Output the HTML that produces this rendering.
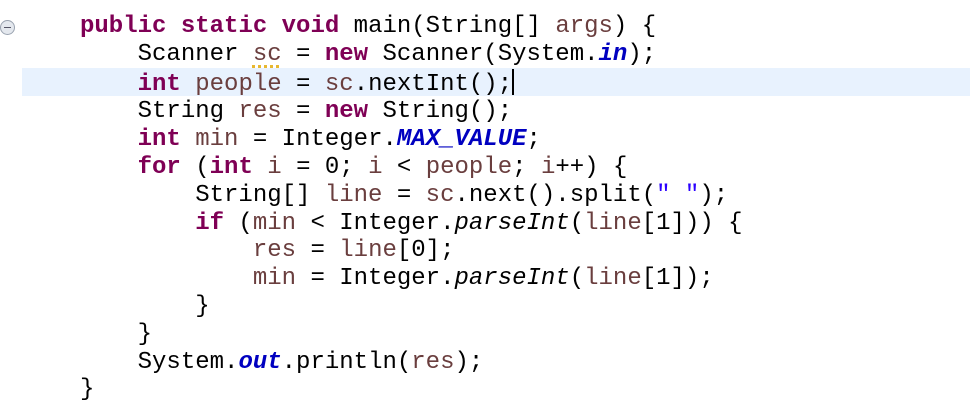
<!DOCTYPE html>
<html><head><meta charset="utf-8"><style>
body{margin:0;width:970px;height:420px;background:#fff;overflow:hidden;position:relative}
.hl{position:absolute;left:22px;right:0;top:68px;height:28px;background:#e8f2fe}
pre{position:absolute;left:80px;top:13px;margin:0;font-family:"Liberation Mono",monospace;font-size:24px;line-height:27.8px;color:#000}
.k{color:#7f0055;font-weight:bold}
.v{color:#6a3e3e}
.f{color:#0000c0;font-weight:bold;font-style:italic}
.i{font-style:italic}
.w{text-decoration:underline dotted #e8b830 3px;text-underline-offset:5px}
.cur{display:inline-block;width:2px;height:26px;background:#000;vertical-align:-5px}
.fold{position:absolute;left:0px;top:20px;width:13px;height:13px;border-radius:50%;border:1px solid #9aa3b0;background:#e4e8ee}
.fold:after{content:"";position:absolute;left:3px;top:6px;width:7px;height:1px;background:#556}
</style></head><body>
<div class="hl"></div>
<div class="fold"></div>
<pre><span class="k">public</span> <span class="k">static</span> <span class="k">void</span> main(String[] <span class="v">args</span>) {
    Scanner <span class="v w">sc</span> = <span class="k">new</span> Scanner(System.<span class="f">in</span>);
    <span class="k">int</span> <span class="v">people</span> = <span class="v">sc</span>.nextInt();<span class="cur"></span>
    String <span class="v">res</span> = <span class="k">new</span> String();
    <span class="k">int</span> <span class="v">min</span> = Integer.<span class="f">MAX_VALUE</span>;
    <span class="k">for</span> (<span class="k">int</span> <span class="v">i</span> = 0; <span class="v">i</span> &lt; <span class="v">people</span>; <span class="v">i</span>++) {
        String[] <span class="v">line</span> = <span class="v">sc</span>.next().split(<span style="color:#2a00ff">" "</span>);
        <span class="k">if</span> (<span class="v">min</span> &lt; Integer.<span class="i">parseInt</span>(<span class="v">line</span>[1])) {
            <span class="v">res</span> = <span class="v">line</span>[0];
            <span class="v">min</span> = Integer.<span class="i">parseInt</span>(<span class="v">line</span>[1]);
        }
    }
    System.<span class="f">out</span>.println(<span class="v">res</span>);
}</pre>
</body></html>
